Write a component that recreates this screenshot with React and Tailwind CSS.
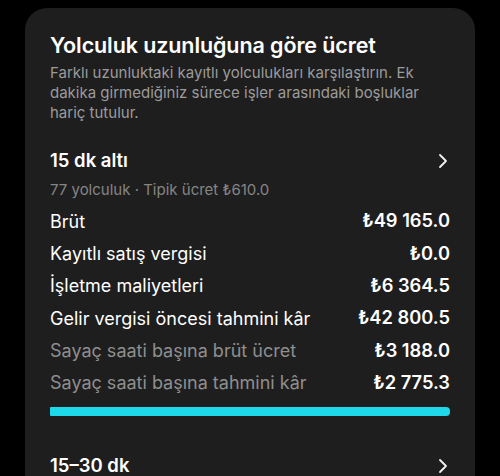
import React from 'react';

const rows = [
  { label: 'Brüt', value: '₺49 165.0' },
  { label: 'Kayıtlı satış vergisi', value: '₺0.0' },
  { label: 'İşletme maliyetleri', value: '₺6 364.5' },
  { label: 'Gelir vergisi öncesi tahmini kâr', value: '₺42 800.5' },
  { label: 'Sayaç saati başına brüt ücret', value: '₺3 188.0', muted: true },
  { label: 'Sayaç saati başına tahmini kâr', value: '₺2 775.3', muted: true },
];

function Chevron() {
  return (
    <svg width="10" height="16" viewBox="0 0 10 16" fill="none" className="mr-[2px]">
      <path d="M2 2l6 6-6 6" stroke="#f2f2f2" strokeWidth="1.8" strokeLinecap="round" strokeLinejoin="round" />
    </svg>
  );
}

export default function App() {
  return (
    <div className="w-[500px] h-[476px] bg-black overflow-hidden pt-[8px] font-['Inter','Noto_Sans',sans-serif]">
      <div className="mx-[25px] bg-[#1e1e1e] rounded-[22px] px-[25px] pt-[23px] pb-10 text-white">
        <h2 className="text-[21.5px] leading-[28px] font-semibold tracking-[-0.1px]">
          Yolculuk uzunluğuna göre ücret
        </h2>
        <p className="mt-[4px] text-[15px] leading-[20px] text-[#9b9b9b]">
          Farklı uzunluktaki kayıtlı yolculukları karşılaştırın. Ek dakika girmediğiniz sürece işler arasındaki boşluklar hariç tutulur.
        </p>

        <div className="mt-[25px] flex items-center justify-between h-[26px]">
          <span className="text-[18.5px] font-semibold">15 dk altı</span>
          <Chevron />
        </div>
        <div className="mt-[6px] text-[15px] leading-[20px] text-[#858585]">
          77 yolculuk · Tipik ücret ₺610.0
        </div>

        <div className="mt-[5px] flex flex-col">
          {rows.map((r) => (
            <div key={r.label} className="flex items-center justify-between h-[32.3px]">
              <span className={`text-[18px] ${r.muted ? 'text-[#8e8e8e]' : 'text-white'}`}>{r.label}</span>
              <span className="text-[18.3px] font-semibold">{r.value}</span>
            </div>
          ))}
        </div>

        <div className="mt-[8px] h-[9px] w-full bg-[#1ed9e9] rounded-r-[4px] rounded-l-[1px]" />

        <div className="mt-[37px] flex items-center justify-between h-[26px]">
          <span className="text-[18.5px] font-semibold">15–30 dk</span>
          <Chevron />
        </div>
      </div>
    </div>
  );
}
